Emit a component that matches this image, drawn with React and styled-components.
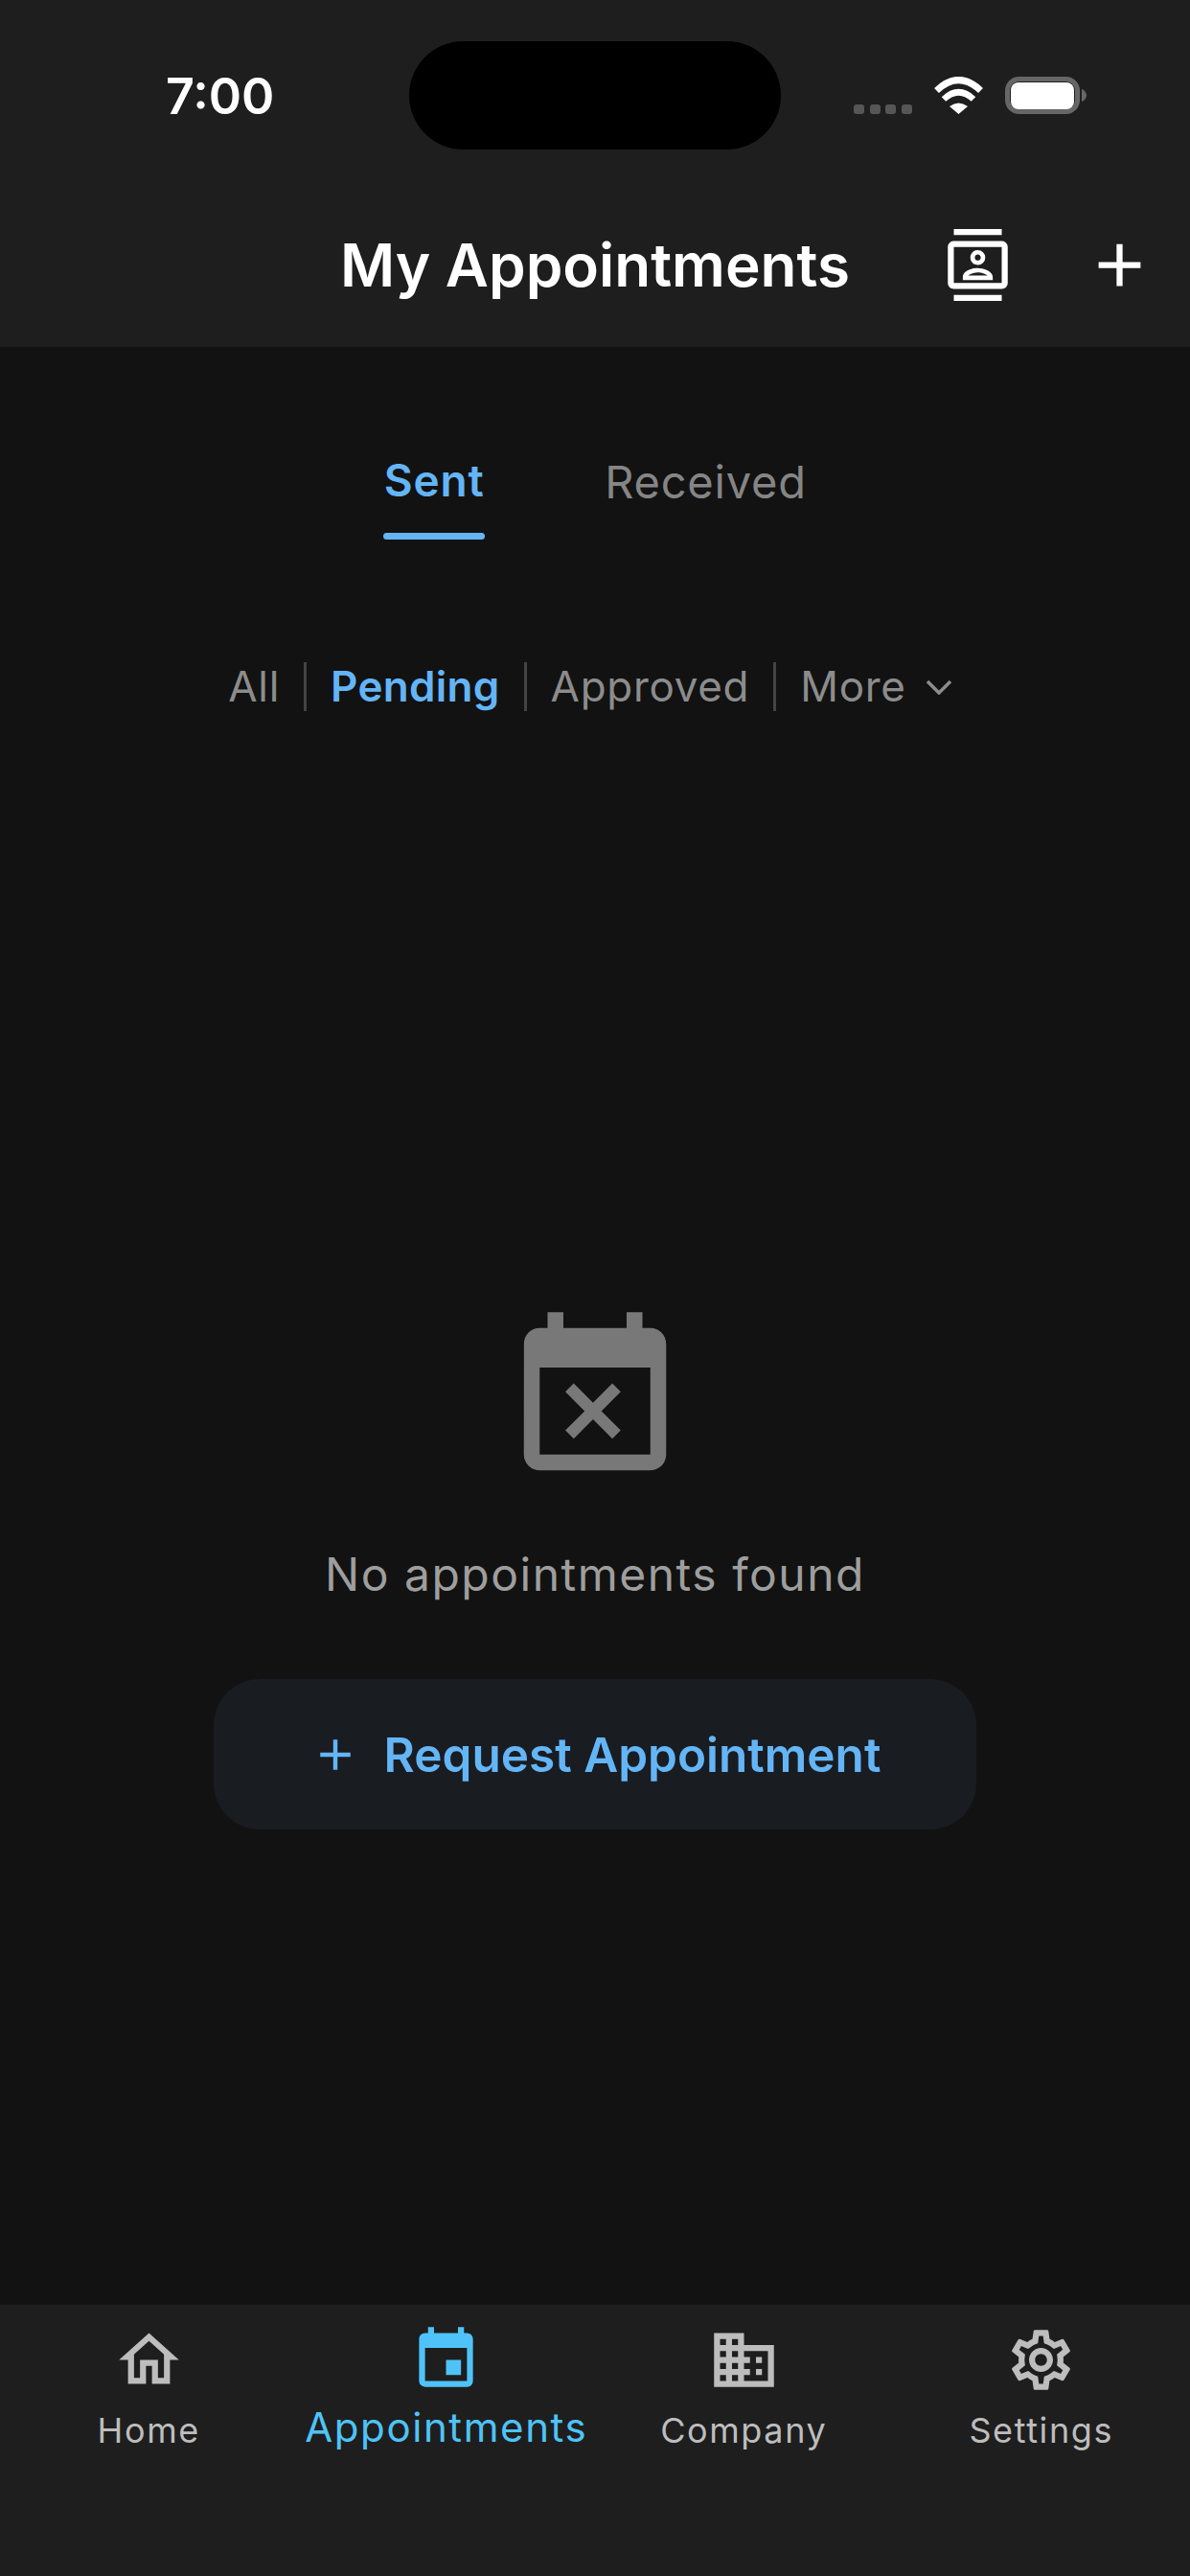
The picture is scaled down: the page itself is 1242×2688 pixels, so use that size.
import React from "react";
import styled, { createGlobalStyle } from "styled-components";
import { MdOutlineContacts, MdAdd, MdEventBusy, MdOutlineHome, MdEvent, MdBusiness, MdOutlineSettings } from "react-icons/md";

const Global = createGlobalStyle`
  html, body { margin: 0; padding: 0; background: #121212; }
  * { box-sizing: border-box; }
  body { font-family: Inter, "Noto Sans", "Liberation Sans", sans-serif; }
`;

const Screen = styled.div`
  width: 1242px;
  height: 2688px;
  display: flex;
  flex-direction: column;
  background: #121212;
  overflow: hidden;
`;

const TopArea = styled.header`
  height: 362px;
  background: #1e1e1e;
  display: flex;
  flex-direction: column;
`;

const StatusBar = styled.div`
  display: grid;
  grid-template-columns: 1fr 388px 1fr;
  height: 113px;
  margin-top: 43px;
`;

const Time = styled.div`
  padding: 28px 0 0 173px;
  font-size: 52px;
  line-height: 60px;
  font-weight: 600;
  color: #fff;
`;

const Island = styled.div`
  background: #000;
  border-radius: 57px;
`;

const StatusIcons = styled.div`
  display: flex;
  align-items: flex-end;
  height: 76px;
  padding: 37px 0 0 76px;
`;

const Dots = styled.div`
  display: flex;
  gap: 5.5px;
  margin-right: 22px;
`;

const Dot = styled.span`
  width: 11px;
  height: 10px;
  border-radius: 3px;
  background: #565656;
`;

const WifiIcon = styled.svg`
  width: 53px;
  height: 39px;
  margin-right: 22px;
  display: block;
`;

const BatteryIcon = styled.svg`
  width: 86px;
  height: 39px;
  display: block;
`;

const TitleBar = styled.div`
  display: grid;
  grid-template-columns: 1fr auto 1fr;
  align-items: center;
  height: 75px;
  margin-top: 83px;
`;

const Title = styled.h1`
  grid-column: 2;
  margin: 0;
  font-size: 62px;
  line-height: 75px;
  font-weight: 600;
  color: #fff;
`;

const Actions = styled.div`
  grid-column: 3;
  display: flex;
  justify-content: flex-end;
  gap: 73px;
  padding-right: 36px;
  color: #fff;
  font-size: 75px;
  svg { display: block; }
`;

const Main = styled.main`
  flex: 1;
  display: flex;
  flex-direction: column;
  align-items: center;
`;

const Tabs = styled.div`
  display: flex;
  gap: 125px;
  align-items: flex-start;
  margin-top: 112px;
`;

const Tab = styled.div`
  display: flex;
  flex-direction: column;
  align-items: center;
  margin-top: ${(p) => (p.$active ? 0 : 2)}px;
  font-size: ${(p) => (p.$active ? 46 : 47)}px;
  line-height: 54px;
  font-weight: ${(p) => (p.$active ? 600 : 400)};
  letter-spacing: 0.8px;
  color: ${(p) => (p.$active ? "#64b5f6" : "#858585")};
`;

const TabLine = styled.span`
  width: 106px;
  height: 7px;
  margin-top: 28px;
  border-radius: 4px;
  background: #64b5f6;
`;

const Filters = styled.div`
  display: flex;
  align-items: center;
  margin-top: 128px;
  height: 51px;
  padding-right: 10px;
`;

const Filter = styled.span`
  font-size: 44px;
  line-height: 51px;
  font-weight: ${(p) => (p.$active ? 600 : 400)};
  letter-spacing: ${(p) => (p.$active ? 0.3 : 0.7)}px;
  color: ${(p) => (p.$active ? "#64b5f6" : "#8c8c8c")};
`;

const FilterDivider = styled.span`
  width: 3px;
  height: 51px;
  margin: 0 25px;
  background: #444;
`;

const Chevron = styled.svg`
  width: 28px;
  height: 16px;
  margin-left: 20px;
  display: block;
`;

const EmptyState = styled.section`
  display: flex;
  flex-direction: column;
  align-items: center;
  margin-top: 619px;
  font-size: 198px;
  color: #787878;
  svg { display: block; }
`;

const EmptyText = styled.p`
  margin: 55px 0 0;
  font-size: 48px;
  line-height: 58px;
  font-weight: 400;
  letter-spacing: 1.5px;
  color: #9e9e9e;
`;

const RequestButton = styled.button`
  display: flex;
  align-items: center;
  justify-content: center;
  gap: 24px;
  width: 796px;
  height: 157px;
  margin-top: 80px;
  border: 0;
  border-radius: 48px;
  background: #191c21;
  color: #64b5f6;
  font-family: inherit;
  font-size: 49.5px;
  font-weight: 600;
  svg { display: block; }
`;

const BottomNav = styled.nav`
  height: 283px;
  background: #1e1e1e;
  display: grid;
  grid-template-columns: repeat(4, 1fr);
  align-items: start;
  padding-top: 20px;
`;

const NavItem = styled.div`
  display: flex;
  flex-direction: column;
  align-items: center;
  font-size: 75px;
  color: ${(p) => (p.$active ? "#4fc3f7" : "#bdbdbd")};
  svg { display: block; }
`;

const NavLabel = styled.span`
  margin-top: ${(p) => (p.$active ? 8 : 11)}px;
  font-size: ${(p) => (p.$active ? 42 : 36)}px;
  line-height: 50px;
  letter-spacing: 1.6px;
`;

const navItems = [
  { label: "Home", Icon: MdOutlineHome },
  { label: "Appointments", Icon: MdEvent, active: true },
  { label: "Company", Icon: MdBusiness },
  { label: "Settings", Icon: MdOutlineSettings },
];

export default function App() {
  return (
    <Screen>
      <Global />
      <TopArea>
        <StatusBar>
          <Time>7:00</Time>
          <Island />
          <StatusIcons>
            <Dots>
              <Dot /><Dot /><Dot /><Dot />
            </Dots>
            <WifiIcon viewBox="0 0 53 39" fill="none" stroke="#fff">
              <path d="M3.5 14.5Q26.5 -7.5 49.5 14.5" strokeWidth="7" />
              <path d="M11 23.5Q26.5 9 42 23.5" strokeWidth="6.5" />
              <path d="M17 31Q26.5 24 36 31L26.5 39Z" fill="#fff" stroke="none" />
            </WifiIcon>
            <BatteryIcon viewBox="0 0 86 39">
              <rect x="2.5" y="2.5" width="73" height="34" rx="12" fill="none" stroke="#666" strokeWidth="5" />
              <rect x="6" y="6" width="66" height="28" rx="8" fill="#fff" />
              <path d="M80 13C83 14 85 17 85 19.5C85 22 83 25 80 26Z" fill="#666" />
            </BatteryIcon>
          </StatusIcons>
        </StatusBar>
        <TitleBar>
          <Title>My Appointments</Title>
          <Actions>
            <MdOutlineContacts />
            <MdAdd />
          </Actions>
        </TitleBar>
      </TopArea>
      <Main>
        <Tabs>
          <Tab $active>
            Sent
            <TabLine />
          </Tab>
          <Tab>Received</Tab>
        </Tabs>
        <Filters>
          <Filter>All</Filter>
          <FilterDivider />
          <Filter $active>Pending</Filter>
          <FilterDivider />
          <Filter>Approved</Filter>
          <FilterDivider />
          <Filter>More</Filter>
          <Chevron viewBox="0 0 28 16" fill="none" stroke="#8c8c8c" strokeWidth="3.5">
            <path d="M2 2L14 14L26 2" />
          </Chevron>
        </Filters>
        <EmptyState>
          <MdEventBusy />
          <EmptyText>No appointments found</EmptyText>
          <RequestButton>
            <MdAdd size={54} />
            Request Appointment
          </RequestButton>
        </EmptyState>
      </Main>
      <BottomNav>
        {navItems.map(({ label, Icon, active }) => (
          <NavItem key={label} $active={active}>
            <Icon />
            <NavLabel $active={active}>{label}</NavLabel>
          </NavItem>
        ))}
      </BottomNav>
    </Screen>
  );
}
